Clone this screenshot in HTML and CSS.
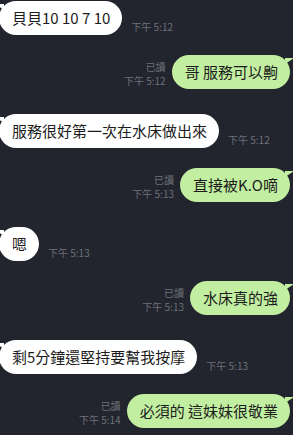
FILE: index.html
```html
<!DOCTYPE html>
<html lang="zh-Hant">
<head>
  <meta charset="UTF-8" />
  <meta name="viewport" content="width=device-width, initial-scale=1.0"/>
  <title>聊天</title>
  <link rel="stylesheet" href="styles.css">
</head>
<body>
  <div class="chat">
    <div class="msg in first">
      <div class="bubble">貝貝10 10 7 10</div>
      <div class="meta"><span class="time">下午 5:12</span></div>
    </div>
    <div class="msg out">
      <div class="meta"><span class="read">已讀</span><span class="time">下午 5:12</span></div>
      <div class="bubble">哥 服務可以齁</div>
    </div>
    <div class="msg in">
      <div class="bubble">服務很好第一次在水床做出來</div>
      <div class="meta"><span class="time">下午 5:12</span></div>
    </div>
    <div class="msg out">
      <div class="meta"><span class="read">已讀</span><span class="time">下午 5:13</span></div>
      <div class="bubble">直接被K.O嘀</div>
    </div>
    <div class="msg in">
      <div class="bubble">嗯</div>
      <div class="meta"><span class="time">下午 5:13</span></div>
    </div>
    <div class="msg out">
      <div class="meta"><span class="read">已讀</span><span class="time">下午 5:13</span></div>
      <div class="bubble">水床真的強</div>
    </div>
    <div class="msg in">
      <div class="bubble">剩5分鐘還堅持要幫我按摩</div>
      <div class="meta"><span class="time">下午 5:13</span></div>
    </div>
    <div class="msg out">
      <div class="meta"><span class="read">已讀</span><span class="time">下午 5:14</span></div>
      <div class="bubble">必須的 這妹妹很敬業</div>
    </div>
  </div>
</body>
</html>
```

FILE: styles.css
```css
body {
  margin: 0;
  background: #22252d;
  font-family: "Noto Sans CJK TC", "Noto Sans", sans-serif;
  overflow: hidden;
}
.chat {
  display: flex;
  flex-direction: column;
  padding: 1px 3px 0 0;
}
.msg {
  display: flex;
  align-items: flex-end;
}
.msg.in {
  margin-top: 25px;
}
.msg.in.first {
  margin-top: 0;
}
.msg.out {
  margin-top: 20px;
  justify-content: flex-end;
}
.bubble {
  position: relative;
  font-size: 15px;
  line-height: 20px;
  padding: 7px 12px;
  border-radius: 17px;
  color: #1c1c1c;
  white-space: nowrap;
}
.msg.in .bubble {
  background: #ffffff;
  margin-left: -1px;
  padding-left: 13px;
}
.msg.out .bubble {
  background: #c1eea0;
  padding: 7px 12px 7px 13px;
}
.msg.in .bubble::before {
  content: "";
  position: absolute;
  left: -4px;
  top: 3px;
  border-top: 6px solid #ffffff;
  border-left: 9px solid transparent;
}
.msg.out .bubble::after {
  content: "";
  position: absolute;
  right: -4px;
  top: 3px;
  border-top: 6px solid #c1eea0;
  border-right: 9px solid transparent;
}
.meta {
  display: flex;
  flex-direction: column;
  font-size: 10px;
  line-height: 14px;
  color: #6d717a;
  padding-bottom: 1px;
}
.msg.in .meta {
  margin-left: 9px;
}
.msg.out .meta {
  align-items: flex-end;
  margin-right: 6px;
}
```
